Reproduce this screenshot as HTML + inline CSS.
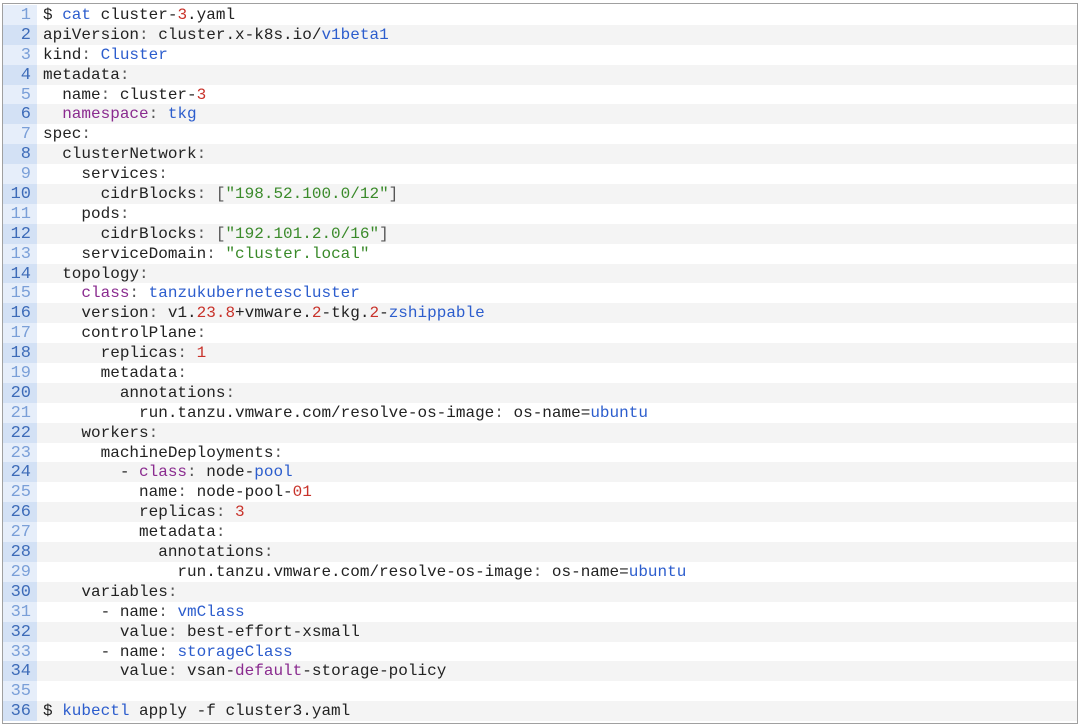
<!DOCTYPE html><html><head><style>
body{margin:0;width:1080px;height:725px;background:#fff;overflow:hidden}
.box{position:absolute;left:2px;top:3px;width:1074px;height:718px;border:1px solid #a0a0a0;background:#fff;padding-top:1px;box-sizing:content-box}
.r{height:19.9px;line-height:21px;display:flex;font-family:"Liberation Mono",monospace;font-size:16px;color:#222;white-space:pre}
.n{width:34px;background:#e6eefa;color:#7a9fd8;text-align:right;padding-right:6px;box-sizing:border-box;font-size:17px}
.r:nth-child(even){background:#f4f4f4}
.r:nth-child(even) .n{background:#d3e1f5;color:#3d6bb8}
.c{padding-left:6px}
.b{color:#2c5dcd}.d{color:#c8322a}.p{color:#8a2b8f}.g{color:#3a8a2a}.k{color:#555}
</style></head><body><div class="box">
<div class="r"><span class="n">1</span><span class="c">$ <span class="b">cat</span> cluster-<span class="d">3</span>.yaml</span></div>
<div class="r"><span class="n">2</span><span class="c">apiVersion<span class="k">:</span> cluster.x-k8s.io/<span class="b">v1beta1</span></span></div>
<div class="r"><span class="n">3</span><span class="c">kind<span class="k">:</span> <span class="b">Cluster</span></span></div>
<div class="r"><span class="n">4</span><span class="c">metadata<span class="k">:</span></span></div>
<div class="r"><span class="n">5</span><span class="c">  name<span class="k">:</span> cluster-<span class="d">3</span></span></div>
<div class="r"><span class="n">6</span><span class="c">  <span class="p">namespace</span><span class="k">:</span> <span class="b">tkg</span></span></div>
<div class="r"><span class="n">7</span><span class="c">spec<span class="k">:</span></span></div>
<div class="r"><span class="n">8</span><span class="c">  clusterNetwork<span class="k">:</span></span></div>
<div class="r"><span class="n">9</span><span class="c">    services<span class="k">:</span></span></div>
<div class="r"><span class="n">10</span><span class="c">      cidrBlocks<span class="k">: [</span><span class="g">"198.52.100.0/12"</span><span class="k">]</span></span></div>
<div class="r"><span class="n">11</span><span class="c">    pods<span class="k">:</span></span></div>
<div class="r"><span class="n">12</span><span class="c">      cidrBlocks<span class="k">: [</span><span class="g">"192.101.2.0/16"</span><span class="k">]</span></span></div>
<div class="r"><span class="n">13</span><span class="c">    serviceDomain<span class="k">:</span> <span class="g">"cluster.local"</span></span></div>
<div class="r"><span class="n">14</span><span class="c">  topology<span class="k">:</span></span></div>
<div class="r"><span class="n">15</span><span class="c">    <span class="p">class</span><span class="k">:</span> <span class="b">tanzukubernetescluster</span></span></div>
<div class="r"><span class="n">16</span><span class="c">    version<span class="k">:</span> v1.<span class="d">23.8</span>+vmware.<span class="d">2</span>-tkg.<span class="d">2</span>-<span class="b">zshippable</span></span></div>
<div class="r"><span class="n">17</span><span class="c">    controlPlane<span class="k">:</span></span></div>
<div class="r"><span class="n">18</span><span class="c">      replicas<span class="k">:</span> <span class="d">1</span></span></div>
<div class="r"><span class="n">19</span><span class="c">      metadata<span class="k">:</span></span></div>
<div class="r"><span class="n">20</span><span class="c">        annotations<span class="k">:</span></span></div>
<div class="r"><span class="n">21</span><span class="c">          run.tanzu.vmware.com/resolve-os-image<span class="k">:</span> os-name=<span class="b">ubuntu</span></span></div>
<div class="r"><span class="n">22</span><span class="c">    workers<span class="k">:</span></span></div>
<div class="r"><span class="n">23</span><span class="c">      machineDeployments<span class="k">:</span></span></div>
<div class="r"><span class="n">24</span><span class="c">        - <span class="p">class</span><span class="k">:</span> node-<span class="b">pool</span></span></div>
<div class="r"><span class="n">25</span><span class="c">          name<span class="k">:</span> node-pool-<span class="d">01</span></span></div>
<div class="r"><span class="n">26</span><span class="c">          replicas<span class="k">:</span> <span class="d">3</span></span></div>
<div class="r"><span class="n">27</span><span class="c">          metadata<span class="k">:</span></span></div>
<div class="r"><span class="n">28</span><span class="c">            annotations<span class="k">:</span></span></div>
<div class="r"><span class="n">29</span><span class="c">              run.tanzu.vmware.com/resolve-os-image<span class="k">:</span> os-name=<span class="b">ubuntu</span></span></div>
<div class="r"><span class="n">30</span><span class="c">    variables<span class="k">:</span></span></div>
<div class="r"><span class="n">31</span><span class="c">      - name<span class="k">:</span> <span class="b">vmClass</span></span></div>
<div class="r"><span class="n">32</span><span class="c">        value<span class="k">:</span> best-effort-xsmall</span></div>
<div class="r"><span class="n">33</span><span class="c">      - name<span class="k">:</span> <span class="b">storageClass</span></span></div>
<div class="r"><span class="n">34</span><span class="c">        value<span class="k">:</span> vsan-<span class="p">default</span>-storage-policy</span></div>
<div class="r"><span class="n">35</span><span class="c"> </span></div>
<div class="r"><span class="n">36</span><span class="c">$ <span class="b">kubectl</span> apply -f cluster3.yaml</span></div>
</div></body></html>
